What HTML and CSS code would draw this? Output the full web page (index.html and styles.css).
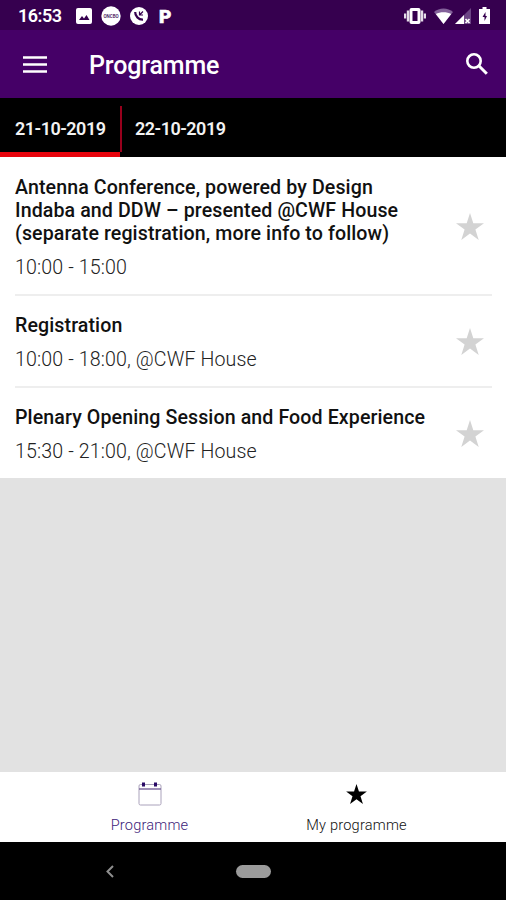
FILE: index.html
```html
<!DOCTYPE html>
<html lang="en">
<head>
    <meta charset="UTF-8">
    <meta name="viewport" content="width=device-width, initial-scale=1.0">
    <title>Programme</title>
    <link rel="stylesheet" href="styles.css">
</head>
<body>
    <svg class="defs">
        <symbol id="star" viewBox="0 0 28 27">
            <path d="M14 0l3.3 10.2H28l-8.6 6.3L22.7 27 14 20.6 5.3 27l3.3-10.5L0 10.2h10.7z"/>
        </symbol>
    </svg>
    <div id="app">
        <div class="status-bar">
            <span class="time">16:53</span>
            <div class="status-left">
                <svg width="16" height="16" viewBox="0 0 16 16">
                    <rect width="16" height="16" rx="2" fill="#fff"/>
                    <path d="M3 12l3-4 2 2.4L10.5 7l3 5z" fill="#36004f"/>
                </svg>
                <svg width="20" height="20" viewBox="0 0 20 20">
                    <circle cx="10" cy="10" r="9.7" fill="#fff"/>
                    <text x="10" y="11.700" class="badge-text">ONCBO</text>
                </svg>
                <svg width="18" height="18" viewBox="0 0 18 18">
                    <circle cx="9" cy="9" r="9" fill="#fff"/>
                    <path d="M5.200 5C5 9 8.500 12.800 13 12.600" fill="none" stroke="#36004f" stroke-width="2.200"/>
                    <path d="M9.500 4.500v3.500h3.500M10 7.500l3-3" fill="none" stroke="#36004f" stroke-width="1.200"/>
                </svg>
                <svg width="18" height="20" viewBox="0 0 18 20">
                    <text x="2" y="16.500" class="app-letter">P</text>
                </svg>
            </div>
            <div class="status-right">
                <svg class="vibrate" width="22" height="16" viewBox="0 0 22 16">
                    <rect x="5.500" y="0" width="11" height="16" rx="2" fill="#fff"/>
                    <rect x="8.500" y="3" width="5" height="10" fill="#36004f"/>
                    <path d="M4 2.500v11M18 2.500v11M1 5.500v5M21 5.500v5" stroke="#e4dce8" stroke-width="2.400"/>
                </svg>
                <svg class="wifi" width="19" height="16" viewBox="0 0 19 16">
                    <path d="M0 4C5-.8 14-.8 19 4L9.500 16z" fill="#83619a"/>
                    <path d="M1.800 6C6 3.500 13 3.500 17.200 6L9.500 16z" fill="#fff"/>
                </svg>
                <svg class="signal" width="16" height="16" viewBox="0 0 16 16">
                    <path d="M16 0v16H0z" fill="#6c4585"/>
                    <path d="M9 7v9H0z" fill="#fff"/>
                    <path d="M10.500 11l4 4M14.500 11l-4 4" stroke="#fff" stroke-width="1.700"/>
                </svg>
                <svg class="battery" width="11" height="17" viewBox="0 0 11 17">
                    <path d="M3.500 0h4v2H11v15H0V2h3.500z" fill="#fff"/>
                    <path d="M6.500 5L3.500 10h2v4L8 9H6.500z" fill="#36004f"/>
                </svg>
            </div>
        </div>
        <div class="header">
            <svg width="24" height="17" viewBox="0 0 24 17">
                <path d="M0 1.500h24M0 8.500h24M0 15.500h24" stroke="#fff" stroke-width="2.700"/>
            </svg>
            <h1>Programme</h1>
            <svg class="search" width="22" height="22" viewBox="0 0 22 22" fill="none" stroke="#fff">
                <circle cx="8" cy="8" r="6.700" stroke-width="2.600"/>
                <path d="M12.800 12.800l8 8" stroke-width="3"/>
            </svg>
        </div>
        <div class="tabs">
            <div class="tab active">21-10-2019</div>
            <div class="tab">22-10-2019</div>
        </div>
        <div class="list">
            <div class="item">
                <div class="info">
                    <h2>Antenna Conference, powered by Design<br>Indaba and DDW – presented @CWF House<br>(separate registration, more info to follow)</h2>
                    <p>10:00 - 15:00</p>
                </div>
                <svg class="star"><use href="#star"/></svg>
            </div>
            <div class="item">
                <div class="info">
                    <h2>Registration</h2>
                    <p>10:00 - 18:00, @CWF House</p>
                </div>
                <svg class="star"><use href="#star"/></svg>
            </div>
            <div class="item">
                <div class="info">
                    <h2>Plenary Opening Session and Food Experience</h2>
                    <p>15:30 - 21:00, @CWF House</p>
                </div>
                <svg class="star"><use href="#star"/></svg>
            </div>
        </div>
        <div class="bottom-nav">
            <div class="nav-item selected">
                <svg width="24" height="24" viewBox="0 0 24 24">
                    <rect x="1" y="2.500" width="22" height="20.500" rx="1.500" fill="none" stroke="#aaa2bb"/>
                    <path d="M1 7h22" stroke="#6d5592" stroke-width="1.300"/>
                    <path d="M5.500 0.500v4M17.500 0.500v4" stroke="#2a0a66" stroke-width="3"/>
                </svg>
                <span>Programme</span>
            </div>
            <div class="nav-item">
                <svg class="nav-star"><use href="#star"/></svg>
                <span>My programme</span>
            </div>
        </div>
        <div class="system-nav">
            <svg width="8" height="13" viewBox="0 0 8 13">
                <path d="M7 1L1.500 6.500 7 12" fill="none" stroke="#8f8f8f" stroke-width="2"/>
            </svg>
            <div class="home"></div>
        </div>
    </div>
</body>
</html>
```

FILE: styles.css
```css
body{
    margin: 0;
    font-family: Roboto, "Liberation Sans", sans-serif;
    background: #e2e2e2;
}
h1, h2, p{
    margin: 0;
}
.defs{
    display: none;
}
#app{
    display: flex;
    flex-direction: column;
    width: 506px;
    height: 900px;
    overflow: hidden;
}
.status-bar{
    display: flex;
    align-items: center;
    height: 30px;
    padding: 1px 16px 0 18px;
    box-sizing: border-box;
    background: #36004f;
    color: #fff;
}
.time{
    width: 58px;
    font-size: 18px;
    font-weight: 600;
    letter-spacing: -0.5px;
}
.status-left{
    display: flex;
    align-items: center;
    gap: 9px;
}
.badge-text{
    font-size: 4.5px;
    font-weight: 500;
    text-anchor: middle;
    fill: #36004f;
}
.app-letter{
    font-size: 19px;
    font-weight: 900;
    fill: #fff;
    stroke: #fff;
    stroke-width: 0.6px;
}
.status-right{
    display: flex;
    align-items: center;
    margin-left: auto;
}
.wifi{
    margin-left: 8px;
}
.signal{
    margin-left: 2px;
}
.battery{
    margin-left: 8px;
}
.header{
    display: flex;
    align-items: center;
    height: 68px;
    padding: 0 18px 0 23px;
    background: #450067;
    color: #fff;
}
.header h1{
    margin: 3px 0 0 42px;
    font-size: 25px;
    font-weight: 500;
    letter-spacing: -0.15px;
}
.search{
    margin-left: auto;
}
.tabs{
    display: flex;
    height: 59px;
    background: #000;
}
.tab{
    position: relative;
    width: 120px;
    box-sizing: border-box;
    padding-left: 15px;
    line-height: 62px;
    font-size: 18px;
    font-weight: 600;
    letter-spacing: -0.5px;
    color: #f2f2f2;
}
.active{
    border-bottom: 5px solid #e8040c;
}
.active::after{
    content: "";
    position: absolute;
    top: 8px;
    right: -2px;
    width: 2px;
    height: 46px;
    background: #98001c;
}
.list{
    padding: 1px 14px 0 15px;
    background: #fff;
}
.item{
    display: flex;
    align-items: center;
    justify-content: space-between;
    padding: 18px 8px 15px 0;
    border-bottom: 2px solid #eee;
}
.item:last-child{
    border-bottom: none;
}
.item h2{
    font-size: 19.6px;
    font-weight: 500;
    line-height: 23px;
    letter-spacing: 0.1px;
    color: #111;
    white-space: nowrap;
}
.item p{
    margin-top: 11px;
    font-size: 19.6px;
    font-weight: 300;
    line-height: 23px;
    letter-spacing: 0.13px;
    color: #222;
}
.star{
    width: 28px;
    height: 27px;
    margin-top: -3px;
    fill: #d3d3d3;
}
.bottom-nav{
    display: flex;
    justify-content: center;
    height: 70px;
    margin-top: auto;
    background: #fff;
}
.nav-item{
    display: flex;
    flex-direction: column;
    align-items: center;
    width: 207px;
    padding-top: 10px;
    box-sizing: border-box;
    font-size: 14.6px;
    font-weight: 300;
    letter-spacing: 0.2px;
    color: #111;
}
.nav-item span{
    margin-top: 10px;
}
.selected{
    color: #3d1c7a;
}
.nav-star{
    width: 21px;
    height: 20px;
    padding: 2px 0;
    fill: #000;
}
.system-nav{
    display: flex;
    align-items: center;
    height: 58px;
    padding-left: 106px;
    background: #000;
}
.home{
    width: 35px;
    height: 13px;
    margin-left: 122px;
    border-radius: 7px;
    background: #9b9b9b;
}
```
